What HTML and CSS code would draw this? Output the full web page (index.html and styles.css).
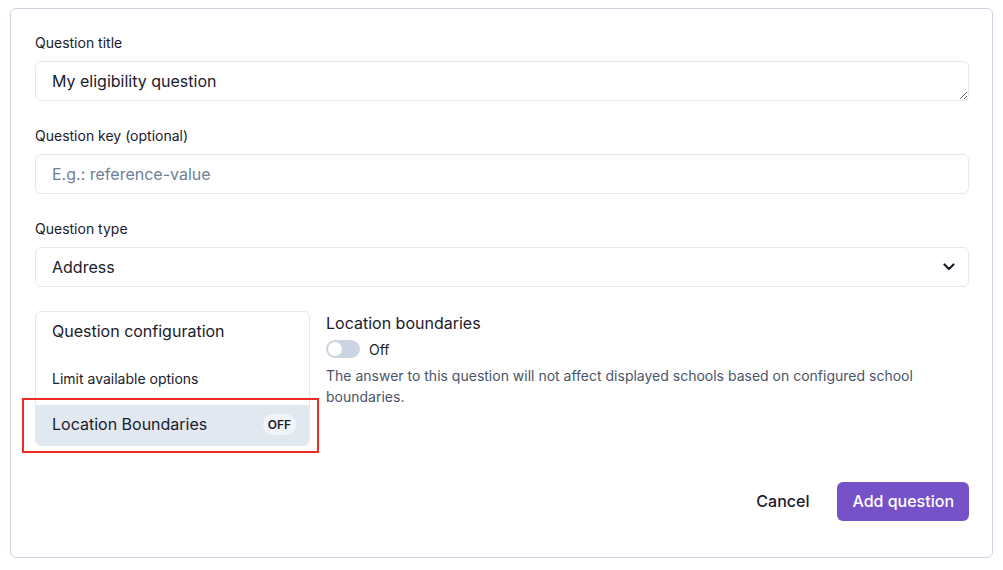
FILE: index.html
```html
<!DOCTYPE html>
<html lang="en">
<head>
<meta charset="utf-8">
<title>Add question</title>
<link rel="stylesheet" href="styles.css">
</head>
<body>
<div class="card">
  <div class="field">
    <label class="label" for="qt">Question title</label>
    <textarea id="qt" class="input textarea" rows="1">My eligibility question</textarea>
  </div>
  <div class="field">
    <label class="label" for="qk">Question key (optional)</label>
    <input id="qk" class="input" type="text" placeholder="E.g.: reference-value">
  </div>
  <div class="field">
    <label class="label" for="qtype">Question type</label>
    <div class="select-wrap">
      <select id="qtype" class="input select">
        <option>Address</option>
      </select>
      <svg class="chevron" width="12" height="8" viewBox="0 0 12 8"><path d="M1.5 1.5 L6 6 L10.5 1.5" fill="none" stroke="#1a202c" stroke-width="2.2" stroke-linecap="round" stroke-linejoin="round"/></svg>
    </div>
  </div>

  <div class="config">
    <div class="config-menu">
      <div class="menu-head">Question configuration</div>
      <div class="menu-item">Limit available options</div>
      <div class="menu-item active">
        <span>Location Boundaries</span>
        <span class="pill">OFF</span>
        <div class="annotation"></div>
      </div>
    </div>
    <div class="config-detail">
      <div class="detail-title">Location boundaries</div>
      <div class="toggle-row">
        <span class="toggle"><span class="knob"></span></span>
        <span class="toggle-label">Off</span>
      </div>
      <p class="desc">The answer to this question will not affect displayed schools based on configured school boundaries.</p>
    </div>
  </div>

  <div class="actions">
    <button class="btn btn-ghost">Cancel</button>
    <button class="btn btn-primary">Add question</button>
  </div>
</div>
</body>
</html>
```

FILE: styles.css
```css
* { box-sizing: border-box; }
html, body { margin: 0; background: #ffffff; }
body {
  padding: 8px 10px;
  font-family: Inter, "Noto Sans", "Liberation Sans", sans-serif;
  color: #1a202c;
}
.card {
  border: 1px solid #cbd5e1;
  border-radius: 6px;
  padding: 23px 23px 36px 24px;
  height: 550px;
}
.field { display: flex; flex-direction: column; margin-bottom: 24px; }
.label { font-size: 14px; line-height: 21px; margin-bottom: 8px; color: #1a202c; }
.input {
  display: block;
  width: 100%;
  height: 40px;
  border: 1px solid #e2e8f0;
  border-radius: 6px;
  padding: 0 16px;
  font-family: inherit;
  font-size: 16px;
  color: #1a202c;
  background: #fff;
  outline: none;
}
.input::placeholder { color: #718096; }
.textarea { padding: 8px 16px; line-height: 22px; resize: vertical; }
.select-wrap { position: relative; }
.select { appearance: none; -webkit-appearance: none; }
.chevron { position: absolute; right: 14px; top: 16px; pointer-events: none; }

.config { display: flex; gap: 16px; align-items: flex-start; }
.config-menu {
  width: 275px;
  flex: none;
  border: 1px solid #e2e8f0;
  border-radius: 6px;
}
.menu-head { padding: 7px 16px 9px; font-size: 16px; line-height: 24px; }
.menu-item { padding: 17px 16px 16px; font-size: 14px; line-height: 20px; }
.menu-item.active {
  position: relative;
  display: flex;
  align-items: center;
  justify-content: space-between;
  padding: 7px 13px 9px 16px;
  font-size: 16px;
  line-height: 24px;
  background: #e2e8f0;
  border-radius: 0 0 5px 5px;
}
.pill {
  background: #f1f5f9;
  border-radius: 11px;
  font-size: 12px;
  font-weight: 600;
  line-height: 21px;
  padding: 0 5px;
}
.annotation {
  position: absolute;
  left: -14px;
  top: -7px;
  right: -10px;
  bottom: -8px;
  border: 2px solid #ee2b24;
  pointer-events: none;
}
.config-detail { flex: 1; }
.detail-title { font-size: 16px; line-height: 24px; }
.toggle-row { display: flex; align-items: center; gap: 9px; height: 24px; margin-top: 2px; }
.toggle {
  width: 34px; height: 18px;
  border-radius: 9px;
  background: #cbd5e1;
  padding: 2px;
  display: flex;
}
.knob { width: 14px; height: 14px; border-radius: 50%; background: #fff; }
.toggle-label { font-size: 14px; }
.desc { margin: 4px 0 0; font-size: 14px; line-height: 21px; color: #4a5568; }

.actions { display: flex; justify-content: flex-end; gap: 12px; margin-top: 36px; }
.btn {
  font-family: inherit;
  font-size: 16px;
  font-weight: 500;
  height: 39px;
  padding: 0 16px 1px;
  border-radius: 6px;
  border: none;
  cursor: pointer;
}
.btn-ghost { background: transparent; color: #1a202c; }
.btn-primary { background: #7652c8; color: #fff; padding: 0 15px 1px; }
```
